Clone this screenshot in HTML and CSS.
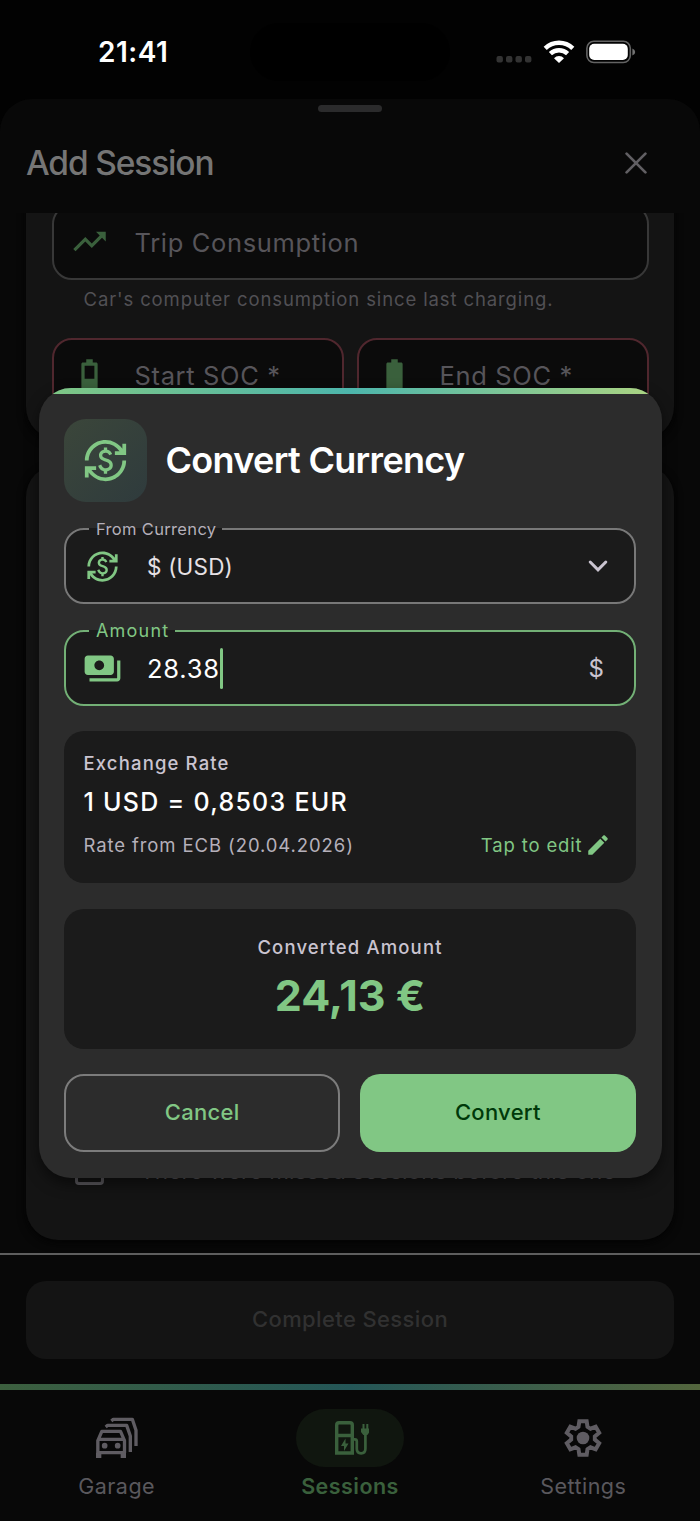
FILE: index.html
```html
<!DOCTYPE html>
<html lang="en">
<head>
    <meta charset="UTF-8">
    <meta name="viewport" content="width=device-width, initial-scale=1.0">
    <title>Add Session</title>
    <link rel="stylesheet" href="styles.css">
</head>
<body>
    <svg class="symbols">
        <symbol id="currency" viewBox="0 0 24 24">
            <path d="M12.89 11.1c-1.78-.59-2.64-.96-2.64-1.9 0-1.02 1.11-1.39 1.81-1.39 1.31 0 1.79.99 1.9 1.34l1.58-.67c-.15-.44-.82-1.91-2.66-2.23V5h-1.75v1.26c-2.6.56-2.62 2.85-2.62 2.96 0 2.27 2.25 2.91 3.35 3.31 1.58.56 2.28 1.07 2.28 2.03 0 1.13-1.05 1.61-1.98 1.61-1.82 0-2.34-1.87-2.4-2.09l-1.66.67c.63 2.19 2.28 2.78 3.02 2.96V19h1.75v-1.24c.52-.09 3.02-.59 3.02-3.22.01-1.39-.6-2.61-3-3.44zM3 21H1v-6h6v2H4.52c1.61 2.41 4.36 4 7.48 4 4.97 0 9-4.03 9-9h2c0 6.08-4.92 11-11 11-3.72 0-7.01-1.85-9-4.67V21zM1 12C1 5.92 5.92 1 12 1c3.72 0 7.01 1.85 9 4.67V3h2v6h-6V7h2.48C17.87 4.59 15.12 3 12 3c-4.97 0-9 4.03-9 9H1z"/>
        </symbol>
    </svg>

    <div class="phone">
        <div class="status-bar">
            <div class="time">21:41</div>
            <div class="island"></div>
            <div class="status-icons">
                <svg width="36" height="8" viewBox="0 0 36 8" fill="#333"><rect x="0.5" y="1" width="6.4" height="6.4" rx="2"/><rect x="10" y="1" width="6.4" height="6.4" rx="2"/><rect x="19.5" y="1" width="6.4" height="6.4" rx="2"/><rect x="29" y="1" width="6.4" height="6.4" rx="2"/></svg>
                <svg class="wifi" width="32" height="24" viewBox="0 0 32 24" fill="none" stroke="#fff" stroke-width="4.5"><path d="M2.2 8.3a20 20 0 0 1 27.6 0"/><path d="M7.4 13.6a12.5 12.5 0 0 1 17.2 0"/><path d="M11 18.2a7 7 0 0 1 10 0L16 23z" fill="#fff" stroke="none"/></svg>
                <svg class="battery" width="50" height="24" viewBox="0 0 50 24"><rect x="0.9" y="1.3" width="43.4" height="21.2" rx="7" fill="none" stroke="#636363" stroke-width="1.6"/><rect x="3.2" y="3.8" width="38.6" height="16.2" rx="5" fill="#fff"/><path d="M46.4 8.4q2.8 1 2.8 3.5t-2.8 3.5z" fill="#737373"/></svg>
            </div>
        </div>

        <div class="sheet">
            <div class="handle"></div>
            <div class="sheet-header">
                <h1>Add Session</h1>
                <svg width="22" height="22" viewBox="0 0 22 22" fill="none" stroke="#615f63" stroke-width="2.7" stroke-linecap="round"><path d="M1.6 1.6l18.8 18.8M20.4 1.6L1.6 20.4"/></svg>
            </div>

            <div class="scroll">
                <div class="card card-top">
                    <div class="input">
                        <svg class="icon" viewBox="0 0 24 24"><path d="M16 6l2.29 2.29-4.88 4.88-4-4L2 16.59 3.41 18l6-6 4 4 6.3-6.29L22 12V6z"/></svg>
                        <span>Trip Consumption</span>
                    </div>
                    <p class="helper">Car's computer consumption since last charging.</p>
                    <div class="row">
                        <div class="input error">
                            <svg class="icon" viewBox="0 0 24 24" fill-rule="evenodd"><path d="M17 5v16c0 .6-.4 1-1 1H8c-.6 0-1-.4-1-1V5c0-.6.4-1 1-1h2V2h4v2h2c.6 0 1 .4 1 1zM9 6v8h6V6z"/></svg>
                            <span>Start SOC *</span>
                        </div>
                        <div class="input error">
                            <svg class="icon" viewBox="0 0 24 24"><path d="M17 5v16c0 .6-.4 1-1 1H8c-.6 0-1-.4-1-1V5c0-.6.4-1 1-1h2V2h4v2h2c.6 0 1 .4 1 1z"/></svg>
                            <span>End SOC *</span>
                        </div>
                    </div>
                </div>
                <div class="card card-bottom">
                    <div class="check-row">
                        <span class="checkbox"></span>
                        <span class="check-text">There were missed sessions before this one</span>
                    </div>
                </div>
            </div>

            <div class="footer">
                <div class="complete-button">Complete Session</div>
            </div>
        </div>

        <div class="nav-line"></div>
        <div class="nav">
            <div class="nav-item">
                <div class="nav-icon">
                    <svg width="43" height="42" viewBox="285 438 129 126" fill="none" stroke="#5f5c62" stroke-width="10" stroke-linejoin="round">
                        <path d="M317 468l6-5h57l11 32v48M334 450l6-5h57l11 33v47"/>
                        <path d="M293.5 545v-36l12-28h56l12 28v36zM293 505h81"/>
                        <path d="M296 545v16M370 545v16" stroke-width="16"/>
                        <circle cx="314" cy="524" r="8.5" fill="#5f5c62" stroke="none"/>
                        <circle cx="353" cy="524" r="8.5" fill="#5f5c62" stroke="none"/>
                    </svg>
                </div>
                <span>Garage</span>
            </div>
            <div class="nav-item active">
                <div class="nav-icon">
                    <svg width="38" height="37" viewBox="331 1420 38 37" fill="none" stroke="#3a603c" stroke-width="3.4">
                        <path d="M336.7 1453V1425q0-2.3 2.3-2.3h11q2.3 0 2.3 2.3v28zM337 1435.5h15"/>
                        <path d="M353 1439.3h1.8q2 0 2 2v7.5q0 4.5 4.3 4.5t4.3-4.5V1432" stroke-width="2.7"/>
                        <path d="M361 1428.5h8.600v3.5l-2.3 3h-4l-2.3-3zM362.5 1424h2v5h-2zM366.3 1424h2v5h-2zM345.5 1438.5l-4.5 7.5h3v5l4.5-7.5h-3z" fill="#3a603c" stroke="none"/>
                    </svg>
                </div>
                <span>Sessions</span>
            </div>
            <div class="nav-item">
                <div class="nav-icon">
                    <svg width="40" height="40" viewBox="0 0 24 24" fill="none" stroke="#5f5c62" stroke-width="2.4">
                        <path d="M9.8 2h4.4l.5 3.3 1.8 1.1 3.1-1.2 2.1 3.7-2.6 2.1v2l2.6 2.1-2.1 3.7-3.1-1.2-1.8 1.1-.5 3.3H9.8l-.5-3.3-1.8-1.1-3.1 1.2-2.1-3.7L4.9 13v-2L2.3 8.9l2.1-3.7 3.1 1.2 1.8-1.1z"/>
                        <circle cx="12" cy="12" r="3.8" fill="#5f5c62" stroke="none"/>
                    </svg>
                </div>
                <span>Settings</span>
            </div>
        </div>
    </div>

    <div class="dialog">
        <div class="dialog-line"></div>
        <div class="dialog-body">
            <div class="dialog-header">
                <div class="badge"><svg width="45" height="45"><use href="#currency"/></svg></div>
                <h2>Convert Currency</h2>
            </div>

            <fieldset class="field">
                <legend class="from-label">From Currency</legend>
                <div class="field-row">
                    <span class="field-icon"><svg width="33" height="33"><use href="#currency"/></svg></span>
                    <span class="field-text">$ (USD)</span>
                    <svg class="chevron" width="20" height="14" viewBox="0 0 20 14" fill="none" stroke="#cac4d0" stroke-width="3" stroke-linecap="round"><path d="M2.2 3l7.8 7.8L17.8 3"/></svg>
                </div>
            </fieldset>

            <fieldset class="field focused">
                <legend class="amount-label">Amount</legend>
                <div class="field-row">
                    <span class="field-icon"><svg width="39" height="39" viewBox="0 0 24 24"><path d="M19 14V6c0-1.1-.9-2-2-2H3c-1.1 0-2 .9-2 2v8c0 1.1.9 2 2 2h14c1.1 0 2-.9 2-2zm-9-1c-1.66 0-3-1.34-3-3s1.34-3 3-3 3 1.34 3 3-1.34 3-3 3zm13-6v11c0 1.1-.9 2-2 2H4v-2h17V7h2z"/></svg></span>
                    <span class="field-text amount">28.38</span>
                    <span class="cursor"></span>
                    <span class="suffix">$</span>
                </div>
            </fieldset>

            <div class="rate-box">
                <div class="rate-title">Exchange Rate</div>
                <div class="rate-value">1 USD = 0,8503 EUR</div>
                <div class="rate-foot">
                    <span class="rate-source">Rate from ECB (20.04.2026)</span>
                    <span class="rate-edit">Tap to edit <svg width="26" height="26" viewBox="0 0 24 24"><path d="M3 17.25V21h3.75L17.81 9.94l-3.75-3.75L3 17.25zM20.71 7.04c.39-.39.39-1.02 0-1.41l-2.34-2.34c-.39-.39-1.02-.39-1.41 0l-1.83 1.83 3.75 3.75 1.83-1.83z"/></svg></span>
                </div>
            </div>

            <div class="result-box">
                <div class="result-title">Converted Amount</div>
                <div class="result-value">24,13 €</div>
            </div>

            <div class="buttons">
                <button class="cancel-button">Cancel</button>
                <button class="convert-button">Convert</button>
            </div>
        </div>
    </div>
</body>
</html>
```
FILE: styles.css
```css
* {
    box-sizing: border-box;
}
body {
    margin: 0;
    background: #020202;
    font-family: Inter, "Liberation Sans", sans-serif;
}
h1, h2, p {
    margin: 0;
}
svg {
    display: block;
    flex: none;
}
span, h1, h2, .time {
    white-space: nowrap;
}
.symbols {
    position: absolute;
    width: 0;
    height: 0;
}
.phone {
    display: flex;
    flex-direction: column;
    width: 700px;
    height: 1521px;
    overflow: hidden;
}
.status-bar {
    display: grid;
    grid-template-columns: 250px 200px 250px;
    align-items: center;
    height: 99px;
}
.time {
    color: #fff;
    font-size: 28px;
    font-weight: 600;
    letter-spacing: 0.5px;
    padding: 4px 0 0 98px;
}
.island {
    height: 58px;
    margin-top: 5px;
    border-radius: 29px;
    background: #000;
}
.status-icons {
    display: flex;
    align-items: center;
    padding: 4px 0 0 46px;
}
.status-icons > svg:first-child {
    margin-top: 15px;
}
.wifi {
    margin-left: 10.5px;
}
.battery {
    margin-left: 11.5px;
}
.sheet {
    display: flex;
    flex-direction: column;
    height: 1285px;
    border-radius: 32px 32px 0 0;
    background: #080808;
}
.handle {
    width: 64px;
    height: 6.5px;
    margin: 6px auto 0;
    border-radius: 4px;
    background: #2b2b2c;
}
.sheet-header {
    display: flex;
    align-items: center;
    justify-content: space-between;
    height: 101.5px;
    padding: 1.5px 53px 0 26px;
}
.sheet-header h1 {
    color: #757575;
    font-size: 33.5px;
    font-weight: 500;
    letter-spacing: -1.15px;
}
.scroll {
    display: flex;
    flex-direction: column;
    height: 1040px;
    overflow: hidden;
    padding: 0 26px 13px;
}
.card {
    border-radius: 32px;
    background: #141414;
    box-shadow: 0 3px 8px #030303;
}
.card-top {
    height: 234.5px;
    flex: none;
    margin: -9px 0 26px;
    padding: 0 25.5px;
    border-radius: 0 0 32px 32px;
}
.input {
    display: flex;
    align-items: center;
    flex: 1;
    height: 75.5px;
    padding-left: 16px;
    border: 2px solid #383838;
    border-radius: 20px;
    background: #0b0b0b;
    color: #57555a;
    font-size: 25.5px;
    letter-spacing: 0.65px;
}
.input span {
    padding-top: 1px;
}
.input.error {
    border-color: #50272e;
}
.icon {
    width: 39px;
    height: 39px;
    margin-right: 26px;
    fill: #3a603c;
}
.helper {
    height: 38px;
    margin: 0 0 20px;
    padding-left: 32px;
    color: #515054;
    font-size: 18.5px;
    line-height: 38px;
    letter-spacing: 0.88px;
    white-space: nowrap;
}
.row {
    display: flex;
    gap: 13px;
}
.card-bottom {
    display: flex;
    flex-direction: column;
    justify-content: flex-end;
    flex: 1;
    padding: 0 0 55px 49px;
}
.check-row {
    display: flex;
    align-items: center;
    height: 29px;
}
.checkbox {
    width: 29px;
    height: 29px;
    margin-right: 40px;
    border: 3px solid #5c5a5f;
    border-radius: 4px;
}
.check-text {
    margin-left: -4px;
    color: #57555a;
    font-size: 22.5px;
    letter-spacing: 0.18px;
}
.footer {
    height: 131px;
    padding: 26px 26px 25px;
    border-top: 2px solid #5e5e5e;
}
.complete-button {
    height: 77.5px;
    border-radius: 20px;
    background: #141414;
    color: #313131;
    font-size: 22px;
    font-weight: 500;
    line-height: 76px;
    letter-spacing: 0.38px;
    text-align: center;
}
.nav-line {
    height: 6px;
    background: linear-gradient(to right, #3c5f3e, #245657 50%, #53653d);
}
.nav {
    display: flex;
    flex: 1;
    padding-top: 19px;
    background: #080808;
}
.nav-item {
    display: flex;
    flex-direction: column;
    align-items: center;
    flex: 1;
    color: #5a585d;
    font-size: 21.5px;
    letter-spacing: 0.45px;
}
.nav-icon {
    display: flex;
    align-items: center;
    justify-content: center;
    width: 108px;
    height: 58px;
    margin-bottom: 6px;
    border-radius: 29px;
}
.active {
    color: #3a603c;
    font-weight: 600;
}
.active .nav-icon {
    background: #10160f;
}

/* dialog */
.dialog {
    position: absolute;
    left: 38.5px;
    top: 387.5px;
    width: 623px;
    height: 790.5px;
    border-radius: 32px;
    overflow: hidden;
    background: #2c2c2c;
    box-shadow: 0 6px 14px rgba(0, 0, 0, 0.5);
}
.dialog-line {
    height: 6.5px;
    background: linear-gradient(to right, #81c784, #4db6ac 50%, #aed581);
}
.dialog-body {
    padding: 25px 25.5px 0;
}
.dialog-header {
    display: flex;
    align-items: center;
    gap: 19px;
    height: 83px;
    margin-bottom: 16.8px;
}
.badge {
    display: flex;
    align-items: center;
    justify-content: center;
    width: 82.5px;
    height: 83px;
    border-radius: 22px;
    background: linear-gradient(135deg, #3b463a, #2f3b3d);
    fill: #81c784;
}
.dialog-header h2 {
    padding-bottom: 1px;
    color: #fff;
    font-size: 36px;
    font-weight: 600;
    letter-spacing: -0.68px;
}
.field {
    height: 85px;
    min-width: 0;
    margin: 0 0 17px;
    padding: 0 0 0 23px;
    border: 2px solid #787878;
    border-radius: 20px;
    background: #1b1b1b;
    color: #e6e1e5;
}
.field legend {
    height: 20px;
    padding: 0 6px 0 7px;
    color: #b5b0ba;
    line-height: 20px;
    white-space: nowrap;
}
.from-label {
    font-size: 16.5px;
    letter-spacing: 0.33px;
}
.amount-label {
    font-size: 18px;
    letter-spacing: 1.2px;
}
.focused {
    border-color: #73b076;
}
.field.focused legend {
    color: #81c784;
}
.field-row {
    display: flex;
    align-items: center;
    height: 55px;
    margin-left: -7.5px;
    padding-right: 26px;
}
.field-icon {
    display: flex;
    justify-content: center;
    width: 41px;
    margin-right: 24.5px;
    fill: #81c784;
}
.field-text {
    font-size: 22.5px;
    letter-spacing: 0.2px;
}
.field-text.amount {
    color: #fff;
    font-size: 25.5px;
    letter-spacing: 0.8px;
}
.cursor {
    width: 3px;
    height: 41px;
    border-radius: 2px;
    background: #81c784;
}
.chevron {
    margin-left: auto;
}
.suffix {
    margin: 0 4px 0 auto;
    color: #cac4d0;
    font-size: 24px;
}
.rate-box {
    height: 152.7px;
    margin: 25px 0 25.5px;
    padding: 19px 26px 0 19.5px;
    border-radius: 20px;
    background: #1b1b1b;
}
.rate-title {
    color: #cac4d0;
    font-size: 18.5px;
    font-weight: 500;
    line-height: 26px;
    letter-spacing: 1.15px;
}
.rate-value {
    margin-top: 6.5px;
    color: #fff;
    font-size: 25px;
    font-weight: 500;
    line-height: 40px;
    letter-spacing: 1.27px;
}
.rate-foot {
    display: flex;
    align-items: center;
    justify-content: space-between;
    height: 26px;
    margin-top: 10px;
}
.rate-source {
    color: #b5b0ba;
    font-size: 18.5px;
    letter-spacing: 0.9px;
}
.rate-edit {
    display: flex;
    align-items: center;
    gap: 2.5px;
    margin-right: -1px;
    color: #81c784;
    font-size: 18.5px;
    letter-spacing: 0.85px;
    fill: #81c784;
}
.result-box {
    height: 139.7px;
    margin-bottom: 25.5px;
    padding-top: 25px;
    border-radius: 20px;
    background: #1b1b1b;
    text-align: center;
}
.result-title {
    color: #cac4d0;
    font-size: 18.5px;
    font-weight: 500;
    line-height: 26px;
    letter-spacing: 1.15px;
}
.result-value {
    margin-top: 7px;
    color: #81c784;
    font-size: 43px;
    font-weight: 700;
    line-height: 56px;
}
.buttons {
    display: grid;
    grid-template-columns: 1fr 1fr;
    gap: 19.5px;
}
button {
    height: 78px;
    padding: 0 0 2px;
    border-radius: 20px;
    font-family: inherit;
    font-size: 22px;
    font-weight: 500;
    letter-spacing: 0.3px;
}
.cancel-button {
    border: 2px solid #7c7c7c;
    background: none;
    color: #81c784;
}
.convert-button {
    border: none;
    background: #81c784;
    color: #00390a;
}
```
